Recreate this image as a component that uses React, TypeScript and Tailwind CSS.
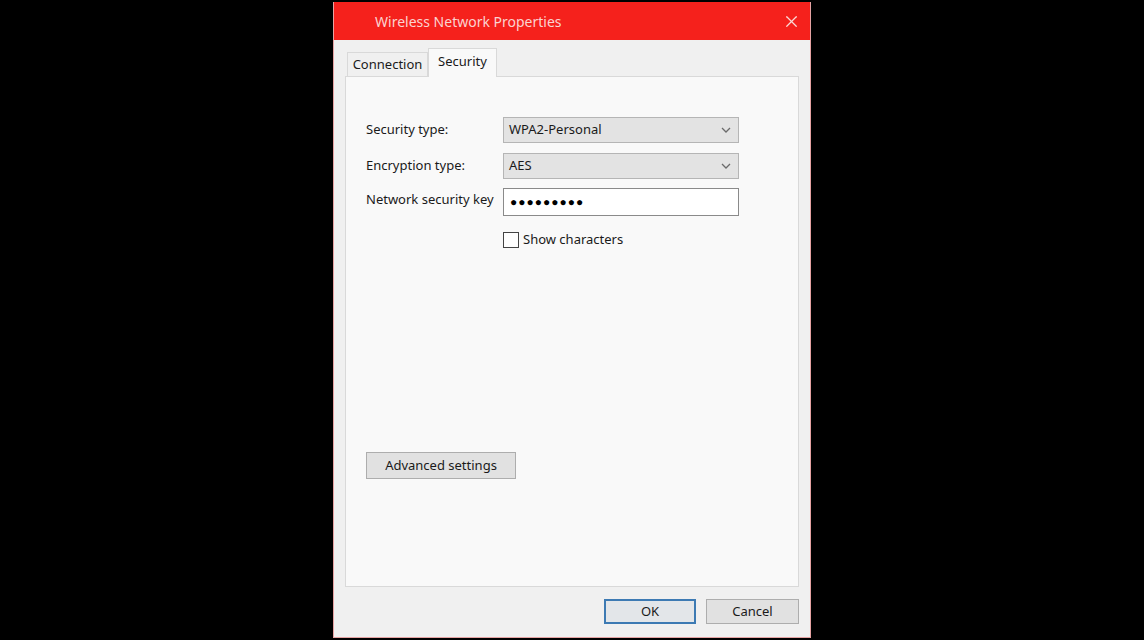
import { X } from 'lucide-react'

const font = { fontFamily: '"Noto Sans", "Open Sans", Arial, sans-serif' }

function Chevron() {
  return (
    <svg width="10" height="6" viewBox="0 0 10 6" className="shrink-0">
      <polyline points="1,1 5,5 9,1" fill="none" stroke="#6b6b6b" strokeWidth="1.3" />
    </svg>
  )
}

function Dropdown({ value }: { value: string }) {
  return (
    <div className="flex h-[26px] w-[236px] items-center justify-between border border-[#b5b5b5] bg-[#e3e3e3] pl-[5px] pr-[7px] text-[13px] text-[#1a1a1a]">
      <span>{value}</span>
      <Chevron />
    </div>
  )
}

export default function App() {
  return (
    <div className="flex h-[640px] w-full bg-black" style={font}>
      <div className="ml-[333px] mt-[2px] flex h-[636px] w-[478px] flex-col border border-t-0 border-[#e6a3a3] bg-[#f0f0f0]">
        {/* title bar */}
        <div className="flex h-[38px] shrink-0 items-center justify-between bg-[#f5211c] pl-[41px] pr-[9px]">
          <span className="text-[14px] text-[#fbd3d0]">Wireless Network Properties</span>
          <X className="h-[19px] w-[19px] text-[#fbd9d6]" strokeWidth={1.6} />
        </div>

        <div className="flex flex-1 flex-col px-[11px]">
          {/* tabs */}
          <div className="mt-[8px] flex items-end pl-[2px]">
            <div className="flex h-[24px] w-[81px] items-center justify-center border border-b-0 border-[#d9d9d9] bg-[#f0f0f0] text-[13px] text-[#1a1a1a]">
              Connection
            </div>
            <div className="relative -mb-px flex h-[29px] w-[69px] items-center justify-center border border-b-0 border-[#d9d9d9] bg-[#f9f9f9] pb-[3px] text-[13px] text-[#1a1a1a]">
              Security
            </div>
          </div>

          {/* panel */}
          <div className="flex h-[511px] flex-col border border-[#d9d9d9] bg-[#f9f9f9] pl-[20px] pt-[40px]">
            <div className="flex flex-col text-[13px] text-[#1a1a1a]">
              <div className="flex items-center">
                <span className="w-[137px]">Security type:</span>
                <Dropdown value="WPA2-Personal" />
              </div>
              <div className="mt-[10px] flex items-center">
                <span className="w-[137px]">Encryption type:</span>
                <Dropdown value="AES" />
              </div>
              <div className="mt-[9px] flex items-start">
                <span className="w-[137px] pt-[2px]">Network security key</span>
                <div className="flex h-[28px] w-[236px] items-center border border-[#8a8a8a] bg-white pl-[6px] text-[12px] tracking-[1px] text-black">
                  ●●●●●●●●●
                </div>
              </div>
              <div className="ml-[137px] mt-[14px] flex items-center gap-[4px]">
                <div className="h-[16px] w-[16px] border border-[#444] bg-white" />
                <span>Show characters</span>
              </div>
            </div>

            <div className="mb-[107px] mt-auto">
              <button className="h-[27px] w-[150px] border border-[#adadad] bg-[#e1e1e1] text-[13px] text-[#1a1a1a]">
                Advanced settings
              </button>
            </div>
          </div>

          {/* footer */}
          <div className="mt-[12px] flex justify-end gap-[10px]">
            <button className="h-[25px] w-[92px] border-2 border-[#3d7ab3] bg-[#e3e6e9] text-[13px] text-[#1a1a1a]">
              OK
            </button>
            <button className="h-[25px] w-[93px] border border-[#adadad] bg-[#e1e1e1] text-[13px] text-[#1a1a1a]">
              Cancel
            </button>
          </div>
        </div>
      </div>
    </div>
  )
}
